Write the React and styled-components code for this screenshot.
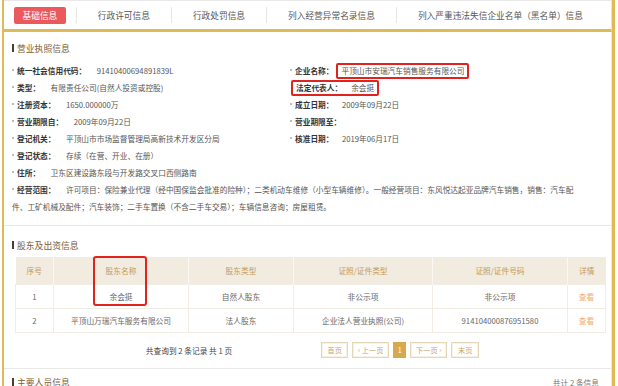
import React from 'react'
import styled, { createGlobalStyle } from 'styled-components'

const GlobalStyle = createGlobalStyle`
  html, body {
    margin: 0;
    padding: 0;
    background: #fff;
    font-family: "Noto Sans CJK SC", "Noto Sans", sans-serif;
  }
`

const GOLD = '#dfbb55'

const Frame = styled.div`
  margin: 0 3px 0 2px;
  border-left: 2px solid ${GOLD};
  border-right: 3px solid ${GOLD};
  min-height: 386px;
  box-sizing: border-box;
  overflow: hidden;
`

const TabBar = styled.div`
  display: flex;
  align-items: center;
  height: 28px;
  border-top: 1px solid #e8e8e8;
  border-bottom: 3px solid ${GOLD};
  border-right: 1px solid #e4e4e4;
`

const Tab = styled.div`
  display: flex;
  align-items: center;
  justify-content: center;
  height: 17px;
  font-size: 8.7px;
  white-space: nowrap;
  color: ${p => (p.$active ? '#fff' : '#555')};
  background: ${p => (p.$active ? '#ea5a5d' : 'transparent')};
  margin: ${p => (p.$active ? '0 10px' : '0')};
  padding: ${p => (p.$active ? '0 8.5px' : '0 21px')};
  border-radius: ${p => (p.$active ? '2px' : '0')};
`

const TabDivider = styled.span`
  width: 1px;
  height: 16px;
  background: #e6e6e6;
`

const Panel = styled.div`
  border-right: 1px solid #e6e6e6;
`

const Section = styled.section`
  padding: ${p => p.$pad || '10px 0 10px'};
  border-top: ${p => (p.$divided ? '1px solid #e8e8e8' : 'none')};
`

const TitleRow = styled.div`
  display: flex;
  align-items: center;
  justify-content: space-between;
  height: 12px;
  padding: 0 12px 0 8px;
  margin-bottom: ${p => p.$gap || '8px'};
`

const Title = styled.h3`
  display: flex;
  align-items: center;
  margin: 0;
  font-size: 8.8px;
  font-weight: 400;
  color: #7b5c36;
  &::before {
    content: '';
    width: 2px;
    height: 8px;
    margin-right: 3px;
    background: #4b3d2e;
  }
`

const TitleNote = styled.span`
  font-size: 7.7px;
  color: #777;
`

const Fields = styled.div`
  display: grid;
  grid-template-columns: 278px 1fr;
  padding: 0 10px 0 8px;
`

const Item = styled.div`
  grid-column: ${p => (p.$full ? '1 / -1' : 'auto')};
  line-height: 17px;
  font-size: 7.7px;
  color: #555;
  white-space: ${p => (p.$full ? 'normal' : 'nowrap')};
`

const Dot = styled.span`
  display: inline-block;
  width: 2px;
  height: 2px;
  margin: 0 3px 0 0;
  vertical-align: 3px;
  border-radius: 50%;
  background: #a9a9a9;
`

const Label = styled.span`
  color: #333;
  font-weight: 700;
`

const Value = styled.span`
  margin-left: ${p => p.$gap || '10.5px'};
`

const Marked = styled.span`
  display: inline-block;
  line-height: 12px;
  padding: 0 3px;
  margin-left: ${p => p.$ml || '0'};
  border: 2px solid #e0231f;
  border-radius: 2px;
`

const TableWrap = styled.div`
  position: relative;
  margin: 0 8px 0 11px;
`

const Table = styled.table`
  width: 590px;
  border-collapse: collapse;
  table-layout: fixed;
  font-size: 7.7px;
`

const Th = styled.th`
  height: 27px;
  padding: 0;
  font-weight: 400;
  color: #c29a58;
  background: #f2ebdf;
  border-left: 1px solid #fbf8f3;
  &:first-child {
    border-left: none;
  }
`

const Td = styled.td`
  height: 23px;
  padding: 0;
  text-align: center;
  color: #666;
  border: 1px solid #f1ece4;
  white-space: nowrap;
`

const ViewLink = styled.span`
  color: #f3ab6c;
`

const Annotation = styled.div`
  position: absolute;
  left: 78px;
  top: -1px;
  width: 54px;
  height: 50px;
  box-sizing: border-box;
  border: 2px solid #e0231f;
  border-radius: 3px;
`

const Pager = styled.div`
  display: flex;
  align-items: center;
  justify-content: center;
  gap: 89px;
  height: 16px;
  padding: 9px 0 10px 10px;
`

const PagerInfo = styled.span`
  font-size: 7.7px;
  color: #444;
`

const PageButtons = styled.div`
  display: flex;
  gap: 4px;
`

const PageButton = styled.span`
  display: flex;
  align-items: center;
  justify-content: center;
  height: 16px;
  min-width: ${p => p.$w || 27}px;
  box-sizing: border-box;
  padding: 0 3px;
  font-size: 7.2px;
  color: ${p => (p.$active ? '#fff' : '#c9a467')};
  background: ${p => (p.$active ? '#d9a84e' : '#fff')};
  border: 1px solid ${p => (p.$active ? '#d9a84e' : '#e5d6b8')};
  box-shadow: ${p => (p.$active ? 'none' : 'inset 0 0 0 1px #f7f1e6')};
`

const tabs = ['行政许可信息', '行政处罚信息', '列入经营异常名录信息', '列入严重违法失信企业名单（黑名单）信息']

const columns = [
  { title: '序号', width: 38 },
  { title: '股东名称', width: 135 },
  { title: '股东类型', width: 105 },
  { title: '证照/证件类型', width: 139 },
  { title: '证照/证件号码', width: 135 },
  { title: '详情', width: 38 },
]

const holders = [
  ['1', '余会挺', '自然人股东', '非公示项', '非公示项'],
  ['2', '平顶山万瑞汽车服务有限公司', '法人股东', '企业法人营业执照(公司)', '914104000876951580'],
]

function Field({ label, value, gap }) {
  return (
    <Item>
      <Dot />
      <Label>{label}</Label>
      <Value $gap={gap}>{value}</Value>
    </Item>
  )
}

export default function App() {
  return (
    <>
      <GlobalStyle />
      <Frame>
        <TabBar>
          <Tab $active>基础信息</Tab>
          {tabs.map(t => (
            <React.Fragment key={t}>
              <TabDivider />
              <Tab>{t}</Tab>
            </React.Fragment>
          ))}
        </TabBar>

        <Panel>
          <Section>
            <TitleRow>
              <Title>营业执照信息</Title>
            </TitleRow>
            <Fields>
              <Field label="统一社会信用代码：" value="91410400694891839L" />
              <Item>
                <Dot />
                <Label>企业名称：</Label>
                <Value $gap="3px">
                  <Marked>平顶山市安瑞汽车销售服务有限公司</Marked>
                </Value>
              </Item>
              <Field label="类型：" value="有限责任公司(自然人投资或控股)" />
              <Item>
                <Marked $ml="1px">
                  <Label>法定代表人：</Label>
                  <Value $gap="9px">余会挺</Value>
                </Marked>
              </Item>
              <Field label="注册资本：" value="1650.000000万" />
              <Field label="成立日期：" value="2009年09月22日" gap="8.5px" />
              <Field label="营业期限自：" value="2009年09月22日" />
              <Field label="营业期限至：" value="" />
              <Field label="登记机关：" value="平顶山市市场监督管理局高新技术开发区分局" />
              <Field label="核准日期：" value="2019年06月17日" gap="8.5px" />
              <Item $full>
                <Dot />
                <Label>登记状态：</Label>
                <Value>存续（在营、开业、在册）</Value>
              </Item>
              <Item $full>
                <Dot />
                <Label>住所：</Label>
                <Value>卫东区建设路东段与开发路交叉口西侧路南</Value>
              </Item>
              <Item $full>
                <Dot />
                <Label>经营范围：</Label>
                <Value>
                  许可项目：保险兼业代理（经中国保监会批准的险种）；二类机动车维修（小型车辆维修）。一般经营项目：东风悦达起亚品牌汽车销售，销售：汽车配
                  <br />
                  件、工矿机械及配件；汽车装饰；二手车置换（不含二手车交易）；车辆信息咨询；房屋租赁。
                </Value>
              </Item>
            </Fields>
          </Section>

          <Section $divided $pad="13px 0 0">
            <TitleRow $gap="6px">
              <Title>股东及出资信息</Title>
            </TitleRow>
            <TableWrap>
              <Table>
                <colgroup>
                  {columns.map(c => (
                    <col key={c.title} style={{ width: c.width }} />
                  ))}
                </colgroup>
                <thead>
                  <tr>
                    {columns.map(c => (
                      <Th key={c.title}>{c.title}</Th>
                    ))}
                  </tr>
                </thead>
                <tbody>
                  {holders.map(row => (
                    <tr key={row[0]}>
                      {row.map((cell, i) => (
                        <Td key={i}>{cell}</Td>
                      ))}
                      <Td>
                        <ViewLink>查看</ViewLink>
                      </Td>
                    </tr>
                  ))}
                </tbody>
              </Table>
              <Annotation />
            </TableWrap>
            <Pager>
              <PagerInfo>共查询到 2 条记录 共 1 页</PagerInfo>
              <PageButtons>
                <PageButton $w={27}>首页</PageButton>
                <PageButton $w={37}>‹ 上一页</PageButton>
                <PageButton $active $w={13}>1</PageButton>
                <PageButton $w={37}>下一页 ›</PageButton>
                <PageButton $w={28}>末页</PageButton>
              </PageButtons>
            </Pager>
          </Section>

          <Section $divided $pad="7px 0 0">
            <TitleRow>
              <Title>主要人员信息</Title>
              <TitleNote>共计 2 条信息</TitleNote>
            </TitleRow>
          </Section>
        </Panel>
      </Frame>
    </>
  )
}
